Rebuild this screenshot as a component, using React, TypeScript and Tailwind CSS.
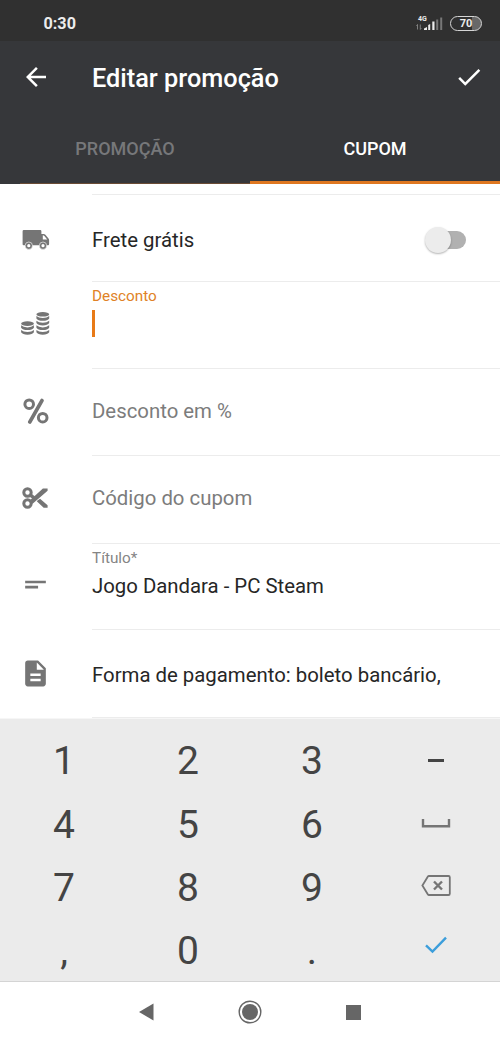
import type { ReactNode } from "react";
import { MdArrowBack, MdCheck, MdDescription, MdShortText } from "react-icons/md";

const TruckIcon = () => (
    <svg width="28" height="20" viewBox="0 0 28 20" fill="#757575">
        <path
            fillRule="evenodd"
            d="M1.8 0h16.4q1.2 0 1.2 1.200v2.800h2.300q1 0 1.700.8l3.100 3.600q.6.700.6 1.600V14q0 1.300-1 1.300H1.600Q.6 15.300.6 14.300V1.200Q.6 0 1.800 0zM20.800 5.300v4.200h4.400L22.400 6q-.6-.7-1.600-.7z"
        />
        <circle cx="6.800" cy="15.700" r="3.700" stroke="#fff" strokeWidth=".6" />
        <circle cx="21" cy="15.700" r="3.700" stroke="#fff" strokeWidth=".6" />
        <circle cx="6.800" cy="15.700" r="1.600" fill="#fff" />
        <circle cx="21" cy="15.700" r="1.600" fill="#fff" />
    </svg>
);

const stackBand = "M0 0q2.200 2.100 6.400 2.100T12.800 0v2.400q-1.500 2.400-6.400 2.400T0 2.400z";

const CoinsIcon = () => (
    <svg className="mr-px mb-1.5" width="30" height="25" viewBox="0 0 30 25" fill="#757575">
        <ellipse cx="7.500" cy="12.600" rx="6.400" ry="2.300" />
        <ellipse cx="22.800" cy="3.300" rx="6.400" ry="2.300" />
        {[14.300, 18.900].map((y) => (
            <path key={y} transform={`translate(1.1 ${y})`} d={stackBand} />
        ))}
        {[5, 9.700, 14.300, 18.900].map((y) => (
            <path key={y} transform={`translate(16.4 ${y})`} d={stackBand} />
        ))}
    </svg>
);

const PercentIcon = () => (
    <svg className="mb-1.5" width="26" height="26" viewBox="0 0 26 26" fill="none" stroke="#757575" strokeWidth="3">
        <circle cx="6.200" cy="6.200" r="4.300" />
        <circle cx="19.700" cy="19.700" r="4.300" />
        <path d="M19 2.500 6.800 24" strokeWidth="3.600" strokeLinecap="round" />
    </svg>
);

const ScissorsIcon = () => (
    <svg className="mr-px mb-[7px]" width="26" height="22" viewBox="0 0 26 22" fill="none" stroke="#757575" strokeWidth="3">
        <circle cx="5.500" cy="5.500" r="3.700" />
        <circle cx="5.500" cy="16.500" r="3.700" />
        <path d="m8.200 7.800 3.800 3" strokeWidth="3.400" />
        <path d="M8 14.400 21.200 2.300h3.600v1.200L10.500 15.700z" fill="#757575" strokeWidth="1.600" />
        <path d="m16 14.200 2-1.500 6.800 6v1.200h-2.800z" fill="#757575" strokeWidth="1.600" />
    </svg>
);

function Row({ icon, size, children }: { icon: ReactNode; size: string; children: ReactNode }) {
    return (
        <div className={`flex ${size}`}>
            <div className="flex w-[71px] shrink-0 items-center justify-center pt-0.5 text-[#757575]">{icon}</div>
            <div className="ml-[21px] flex flex-1 flex-col border-b border-[#ececec]">{children}</div>
        </div>
    );
}

const line = "flex flex-1 items-center whitespace-nowrap text-[20.38px]";
const keyText = "text-[39px] text-[#444]";

const keys: { id: string; node: ReactNode }[] = [
    { id: "1", node: "1" },
    { id: "2", node: "2" },
    { id: "3", node: "3" },
    { id: "minus", node: <span className="mb-0.5 h-[3px] w-4 bg-[#444]" /> },
    { id: "4", node: "4" },
    { id: "5", node: "5" },
    { id: "6", node: "6" },
    {
        id: "space",
        node: (
            <svg className="mb-[3px]" width="30" height="9" viewBox="0 0 30 9" fill="none" stroke="#757575" strokeWidth="2.400">
                <path d="M2 0v7.200h26V0" />
            </svg>
        ),
    },
    { id: "7", node: "7" },
    { id: "8", node: "8" },
    { id: "9", node: "9" },
    {
        id: "backspace",
        node: (
            <svg className="mb-1.5" width="30" height="21" viewBox="0 0 30 21" fill="none" stroke="#757575" strokeWidth="1.800">
                <path d="M8 1h19.500q1.300 0 1.300 1.300v16.400q0 1.300-1.300 1.300H8q-.7 0-1.100-.6L1.400 10.500 6.900 1.600Q7.300 1 8 1z" />
                <path d="m13 6.500 8 8m0-8-8 8" strokeWidth="2.400" />
            </svg>
        ),
    },
    { id: "comma", node: "," },
    { id: "0", node: "0" },
    { id: "dot", node: "." },
    {
        id: "enter",
        node: (
            <svg className="mb-[13px]" width="24" height="18" viewBox="0 0 24 18" fill="none" stroke="#3c9edb" strokeWidth="2.400">
                <path d="m2 9.300 6.500 6.300L22 1.700" />
            </svg>
        ),
    },
];

function StatusBar() {
    return (
        <div className="flex h-[41px] items-center bg-[#303030] pt-1.5 pr-[18px] pl-[43.500px] text-[#ececec]">
            <span className="pt-0.5 text-[16.200px] font-bold">0:30</span>
            <div className="ml-auto flex items-center gap-[7px]">
                <svg className="mb-px" width="27" height="18" viewBox="0 0 27 18">
                    <text x="2" y="7" fontSize="7" fontWeight="700" fill="#ececec">4G</text>
                    <path d="M1.500 15.500v-5l-1 1.500M4.300 10.500v5l1-1.500" stroke="#888" strokeWidth=".9" fill="none" />
                    <path d="M8 16v-1.500l3-1.500v3zM12.200 16v-5l2-1v6zM16.300 16V7.500h2.200V16z" fill="#ececec" />
                    <path d="M20.200 16V5.500h2V16zM24.200 16V3.500h2V16z" fill="#777" />
                </svg>
                <div className="flex h-[15px] w-8 items-center justify-center rounded-full border-[1.500px] border-[#d5d5d5] bg-linear-to-r from-[#303030] from-70% to-[#686868] to-70% text-[11px] leading-none font-bold">
                    70
                </div>
            </div>
        </div>
    );
}

export default function App() {
    return (
        <div className="flex h-[1041px] w-[500px] flex-col overflow-hidden bg-white font-['Roboto',sans-serif] text-[#262626]">
            <StatusBar />

            <header className="flex h-[143px] flex-col bg-[#36373a] text-white">
                <div className="flex h-[73px] items-center pr-4 pl-[21px]">
                    <MdArrowBack className="mb-0.5 h-[30px] w-[30px]" />
                    <h1 className="mt-0.5 ml-[41px] text-[25.300px] font-medium">Editar promoção</h1>
                    <MdCheck className="mb-0.5 ml-auto h-[30px] w-[30px]" />
                </div>
                <div className="grid flex-1 grid-cols-2 text-[18px] font-medium">
                    <div className="flex flex-col">
                        <div className="flex flex-1 items-center justify-center pb-px text-[#77787a]">PROMOÇÃO</div>
                        <div className="ml-5 h-px bg-[#6b4c35]" />
                    </div>
                    <div className="flex items-center justify-center border-b-[3px] border-[#df7720] pt-px">CUPOM</div>
                </div>
            </header>

            <main className="flex h-[535px] flex-col">
                <Row icon={null} size="h-[11px]">{null}</Row>
                <Row icon={<TruckIcon />} size="h-[87px]">
                    <div className={`${line} justify-between pt-1 pr-[34px]`}>
                        Frete grátis
                        <span className="relative h-[18px] w-9 rounded-full bg-[#b1b1b1]">
                            <span className="absolute -top-1 -left-[5px] h-[26px] w-[26px] rounded-full bg-[#ececec] shadow-[0_1px_2px_rgba(0,0,0,0.3)]" />
                        </span>
                    </div>
                </Row>
                <Row icon={<CoinsIcon />} size="h-[87px]">
                    <span className="mt-[5px] text-[15.300px] leading-[18px] text-[#e08226]">Desconto</span>
                    <span className="mt-[5px] h-[27px] w-[3px] bg-[#e87a17]" />
                </Row>
                <Row icon={<PercentIcon />} size="h-[87px]">
                    <div className={`${line} pb-0.5 text-[#7c7c7c]`}>Desconto em %</div>
                </Row>
                <Row icon={<ScissorsIcon />} size="h-[88px]">
                    <div className={`${line} pb-0.5 text-[#7c7c7c]`}>Código do cupom</div>
                </Row>
                <Row icon={<MdShortText className="mb-[7px] h-[31px] w-[31px]" />} size="h-[86px]">
                    <span className="mt-[5px] text-[15.300px] leading-[18px] text-[#858585]">Título*</span>
                    <span className="mt-[6px] text-[20.350px] leading-[26px]">Jogo Dandara - PC Steam</span>
                </Row>
                <Row icon={<MdDescription className="mb-1 h-[31px] w-[31px]" />} size="h-[88px]">
                    <div className={`${line} pt-1`}>Forma de pagamento: boleto bancário,</div>
                </Row>
                <div className="h-px bg-[#f6f6f6]" />
            </main>

            <div className="grid h-[263px] grid-cols-4 grid-rows-[repeat(4,63.300px)] border-b border-[#d4d4d4] bg-[#ebebeb] pt-[11px] pr-0.5 pl-0.5">
                {keys.map((k) => (
                    <div key={k.id} className={`flex items-center justify-center ${keyText}`}>
                        {k.node}
                    </div>
                ))}
            </div>

            <nav className="flex flex-1 items-center justify-center gap-[84px] pt-px">
                <svg width="15" height="18" viewBox="0 0 15 18" fill="#666">
                    <path d="M14.500.500v17L0 9z" />
                </svg>
                <svg width="24" height="24" viewBox="0 0 24 24">
                    <circle cx="12" cy="12" r="10.800" fill="none" stroke="#666" strokeWidth="1.400" />
                    <circle cx="12" cy="12" r="8" fill="#666" />
                </svg>
                <span className="h-[15px] w-[15px] bg-[#666]" />
            </nav>
        </div>
    );
}
